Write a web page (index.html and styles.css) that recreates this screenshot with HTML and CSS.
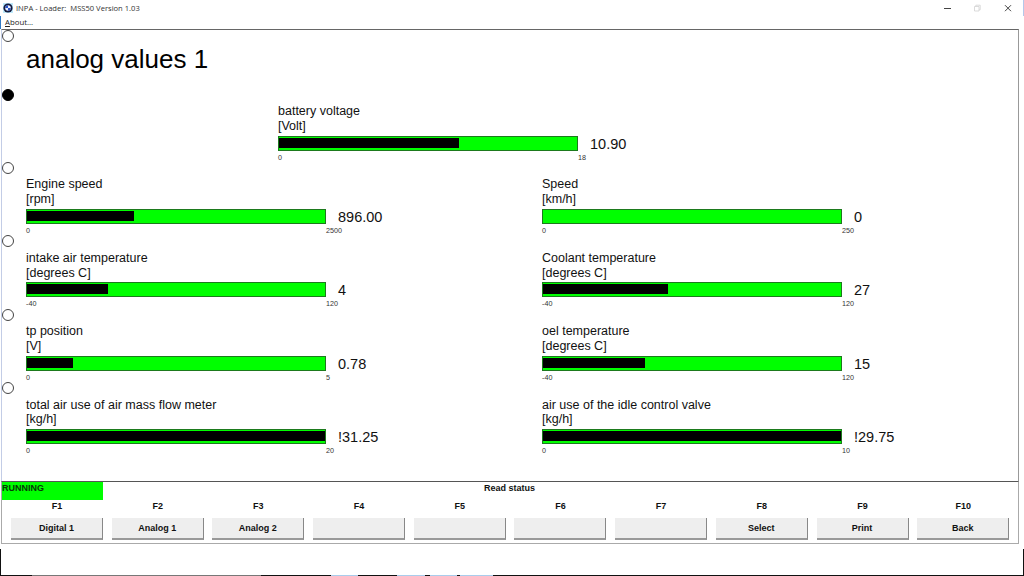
FILE: index.html
```
<!DOCTYPE html>
<html lang="en">
<head>
  <meta charset="UTF-8">
  <meta name="viewport" content="width=device-width, initial-scale=1.0">
  <title>INPA - Loader: MSS50 Version 1.03</title>
  <link rel="stylesheet" href="styles.css">
</head>
<body>

  <div class="window">

    <!-- Title bar -->
    <div class="titlebar">
      <svg class="logo" viewBox="0 0 10 10">
        <rect width="10" height="10" fill="#bfe9fb"/>
        <circle cx="5" cy="5" r="4.6" fill="#141a3c"/>
        <circle cx="5" cy="5" r="2.8" fill="#e8edff"/>
        <path d="M5 5V2.2A2.8 2.8 0 0 0 2.2 5ZM5 5V7.8A2.8 2.8 0 0 0 7.8 5Z" fill="#2a55c8"/>
      </svg>
      <span class="title">INPA - Loader:&nbsp; MSS50 Version 1.03</span>
      <svg class="win-btn" viewBox="0 0 10 10"><path d="M2 5.5H9" stroke="#444"/></svg>
      <svg class="win-btn" viewBox="0 0 10 10"><path d="M2.5 3.5H7V8H2.5ZM3.8 3.5V2.2H8.2V6.8H7" fill="none" stroke="#d2d2d2" stroke-width=".8"/></svg>
      <svg class="win-btn" viewBox="0 0 10 10"><path d="M3 2.2L9 8.2M9 2.2L3 8.2" stroke="#444"/></svg>
    </div>

    <!-- Menu -->
    <div class="menu"><u>A</u>bout...</div>

    <!-- Gauges -->
    <div class="screen">
      <div class="row heading">
        <span class="dot"></span>
        <h1>analog values 1</h1>
      </div>

      <div class="row">
        <span class="dot on"></span>
        <div class="gauge center">
          <div class="label">battery voltage<br>[Volt]</div>
          <div class="reading">
            <div class="bar"><div class="fill" style="width: 60.5%"></div></div>
            <span class="value">10.90</span>
          </div>
          <div class="scale"><span>0</span><span>18</span></div>
        </div>
      </div>

      <div class="row">
        <span class="dot"></span>
        <div class="gauge">
          <div class="label">Engine speed<br>[rpm]</div>
          <div class="reading">
            <div class="bar"><div class="fill" style="width: 35.8%"></div></div>
            <span class="value">896.00</span>
          </div>
          <div class="scale"><span>0</span><span>2500</span></div>
        </div>
        <div class="gauge">
          <div class="label">Speed<br>[km/h]</div>
          <div class="reading">
            <div class="bar"></div>
            <span class="value">0</span>
          </div>
          <div class="scale"><span>0</span><span>250</span></div>
        </div>
      </div>

      <div class="row">
        <span class="dot"></span>
        <div class="gauge">
          <div class="label">intake air temperature<br>[degrees C]</div>
          <div class="reading">
            <div class="bar"><div class="fill" style="width: 27.3%"></div></div>
            <span class="value">4</span>
          </div>
          <div class="scale"><span>-40</span><span>120</span></div>
        </div>
        <div class="gauge">
          <div class="label">Coolant temperature<br>[degrees C]</div>
          <div class="reading">
            <div class="bar"><div class="fill" style="width: 41.8%"></div></div>
            <span class="value">27</span>
          </div>
          <div class="scale"><span>-40</span><span>120</span></div>
        </div>
      </div>

      <div class="row">
        <span class="dot"></span>
        <div class="gauge">
          <div class="label">tp position<br>[V]</div>
          <div class="reading">
            <div class="bar"><div class="fill" style="width: 15.5%"></div></div>
            <span class="value">0.78</span>
          </div>
          <div class="scale"><span>0</span><span>5</span></div>
        </div>
        <div class="gauge">
          <div class="label">oel temperature<br>[degrees C]</div>
          <div class="reading">
            <div class="bar"><div class="fill" style="width: 34.2%"></div></div>
            <span class="value">15</span>
          </div>
          <div class="scale"><span>-40</span><span>120</span></div>
        </div>
      </div>

      <div class="row">
        <span class="dot"></span>
        <div class="gauge">
          <div class="label">total air use of air mass flow meter<br>[kg/h]</div>
          <div class="reading">
            <div class="bar"><div class="fill" style="width: 100%"></div></div>
            <span class="value">!31.25</span>
          </div>
          <div class="scale"><span>0</span><span>20</span></div>
        </div>
        <div class="gauge">
          <div class="label">air use of the idle control valve<br>[kg/h]</div>
          <div class="reading">
            <div class="bar"><div class="fill" style="width: 100%"></div></div>
            <span class="value">!29.75</span>
          </div>
          <div class="scale"><span>0</span><span>10</span></div>
        </div>
      </div>
    </div>

    <!-- Status and function keys -->
    <div class="panel">
      <div class="status">
        <div class="running">RUNNING</div>
        <div class="message">Read status</div>
      </div>
      <div class="keys">
        <div class="key">F1<button>Digital 1</button></div>
        <div class="key">F2<button>Analog 1</button></div>
        <div class="key">F3<button>Analog 2</button></div>
        <div class="key">F4<button></button></div>
        <div class="key">F5<button></button></div>
        <div class="key">F6<button></button></div>
        <div class="key">F7<button></button></div>
        <div class="key">F8<button>Select</button></div>
        <div class="key">F9<button>Print</button></div>
        <div class="key">F10<button>Back</button></div>
      </div>
    </div>

    <div class="footer"></div>
    <div class="taskbar"></div>
  </div>

</body>
</html>
```
FILE: styles.css
```
* {
  box-sizing: border-box;
}
body {
  margin: 0;
  background: #fff;
  color: #111;
  font-family: "Liberation Sans", Arial, sans-serif;
  overflow: hidden;
}
.window {
  width: 1024px;
  height: 576px;
  display: flex;
  flex-direction: column;
}

/* title bar + menu */
.titlebar {
  height: 16px;
  display: flex;
  align-items: center;
  padding: 0 11px 0 3px;
  border-right: 1px solid #b4c8ea;
  font-family: "Open Sans", sans-serif;
  font-size: 7.6px;
  color: #333;
}
.logo {
  width: 10px;
  height: 10px;
  margin-right: 3px;
}
.title {
  flex: 1;
  white-space: nowrap;
}
.win-btn {
  width: 10px;
  height: 10px;
  margin-left: 20px;
}
.menu {
  height: 13px;
  padding-left: 4px;
  border-left: 1px solid #2f78c4;
  font-family: "Open Sans", sans-serif;
  font-size: 7.8px;
  line-height: 12px;
  color: #222;
}

/* gauges */
.screen {
  height: 452px;
  margin-left: 1px;
  width: 1018px;
  border-top: 1px solid #666;
  border-left: 1px solid #c3cde6;
  border-right: 1px solid #999;
}
.row {
  display: flex;
  height: 73.4px;
}
.heading {
  height: 58.6px;
}
.dot {
  flex: none;
  width: 12px;
  height: 12px;
  margin: 0 12px 0 0;
  border: 1px solid #444;
  border-radius: 50%;
}
.dot.on {
  background: #000;
  border-color: #000;
}
h1 {
  margin: 13px 0 0;
  font-size: 26px;
  font-weight: normal;
  line-height: 32px;
  color: #000;
}
.gauge {
  flex: none;
  width: 516px;
  padding-top: 15.5px;
}
.gauge + .gauge {
  width: 440px;
}
.gauge.center {
  margin-left: 252px;
}
.label {
  font-size: 12.5px;
  line-height: 14.7px;
}
.reading {
  display: flex;
  height: 15px;
  margin-top: 2px;
}
.bar {
  width: 300px;
  height: 15px;
  padding-top: 1px;
  border: 1px solid #1d7a1d;
  background: #0f0;
}
.fill {
  height: 10px;
  background: #000;
}
.value {
  margin-left: 12px;
  font-size: 14.5px;
  line-height: 17px;
}
.scale {
  display: flex;
  width: 340px;
  padding-top: 3px;
  font-size: 7.2px;
  line-height: 8px;
  color: #333;
}
.scale span:first-child {
  width: 300px;
}

/* function keys */
.panel {
  height: 63px;
  width: 1018px;
  margin-left: 1px;
  border: 1px solid #aaa;
  border-top-color: #555;
  font-size: 9px;
  font-weight: bold;
  color: #111;
}
.status {
  display: flex;
  height: 18px;
  line-height: 12px;
}
.running {
  width: 101px;
  height: 18px;
  background: #0f0;
  color: #063806;
}
.message {
  width: 813px;
  text-align: center;
}
.keys {
  display: flex;
  gap: 8.7px;
  padding-left: 9px;
}
.key {
  width: 92px;
  text-align: center;
  line-height: 12px;
}
.key button {
  display: block;
  width: 92px;
  height: 22px;
  margin-top: 6px;
  padding: 0;
  border: 0;
  border-right: 1px solid #888;
  border-bottom: 2px solid #999;
  background: #eee;
  font: inherit;
  color: inherit;
}

.footer {
  flex: 1;
  margin-top: 5px;
  border-left: 1px solid #111;
  border-right: 1px solid #111;
}
.taskbar {
  height: 1px;
  background: linear-gradient(to right,
    #111 32px, #777 32px 261px, #111 261px 331px,
    #a9cdec 331px 358px, #111 358px 397px,
    #a9cdec 397px 425px, #111 425px 430px,
    #a9cdec 430px 457px, #111 457px 460px,
    #a9cdec 460px 493px, #111 493px);
}
```
